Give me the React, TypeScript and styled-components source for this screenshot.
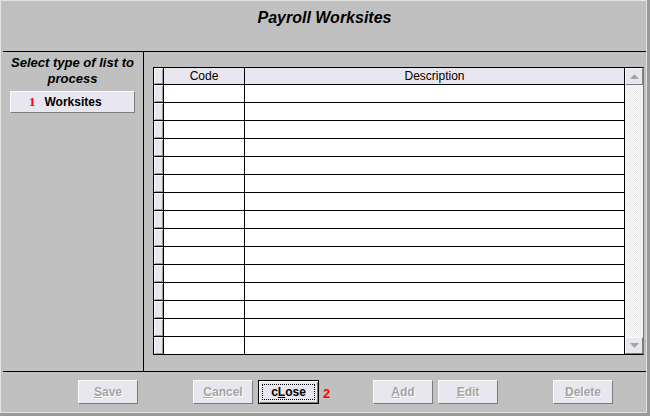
import React from "react";
import styled, { createGlobalStyle } from "styled-components";

const GlobalStyle = createGlobalStyle`
  html, body {
    margin: 0;
    padding: 0;
    background: #9a9a9a;
  }
  * {
    box-sizing: border-box;
  }
`;

const LAVENDER = "#e8e6ee";
const ROW_COUNT = 15;

const Screen = styled.div`
  width: 650px;
  height: 416px;
  background: #9a9a9a;
  font-family: "Liberation Sans", Arial, sans-serif;
`;

const Window = styled.div`
  width: 647px;
  height: 413px;
  border: 1px solid #e2e2e2;
  background: #c0c0c0;
  display: flex;
  flex-direction: column;
`;

const TitleBar = styled.div`
  height: 50px;
  padding-top: 8px;
  margin-left: 2px;
  text-align: center;
  font-size: 16px;
  font-weight: bold;
  font-style: italic;
  color: #000;
`;

const Middle = styled.div`
  height: 321px;
  margin-left: 2px;
  border-top: 1px solid #000;
  border-bottom: 1px solid #000;
  display: flex;
`;

const LeftPanel = styled.div`
  width: 141px;
  border-right: 1px solid #000;
  padding: 3px 8px 0 7px;
  display: flex;
  flex-direction: column;
  align-items: stretch;
`;

const PanelCaption = styled.div`
  font-size: 13px;
  line-height: 16px;
  font-weight: bold;
  font-style: italic;
  text-align: center;
  color: #000;
`;

const ListButton = styled.button`
  margin-top: 4px;
  height: 22px;
  background: ${LAVENDER};
  border: 1px solid;
  border-color: #fafafa #7c7c7c #7c7c7c #fafafa;
  padding: 0 0 0 18px;
  display: flex;
  align-items: center;
  gap: 9px;
  font-family: "Liberation Sans", Arial, sans-serif;
  font-size: 12px;
  font-weight: bold;
  color: #000;
`;

const RedNumber = styled.span<{ $serif?: boolean }>`
  color: #ff0000;
  font-weight: bold;
  font-size: 13px;
  font-family: ${({ $serif }) =>
    $serif ? '"Liberation Serif", "Times New Roman", serif' : '"Liberation Sans", Arial, sans-serif'};
`;

const GridArea = styled.div`
  flex: 1;
  padding: 15px 2px 16px 9px;
`;

const Grid = styled.div`
  height: 288px;
  display: flex;
  border-top: 1px solid #000;
  border-bottom: 1px solid #000;
  border-left: 1px solid #000;
  border-right: 1px solid #7c7c7c;
  background: #fff;
`;

const Table = styled.div`
  flex: 1;
  display: flex;
  flex-direction: column;
  border-right: 1px solid #000;
`;

const Row = styled.div<{ $header?: boolean; $last?: boolean }>`
  display: grid;
  grid-template-columns: 10px 81px 1fr;
  height: ${({ $header, $last }) => ($header ? "17px" : $last ? "17px" : "18px")};
  border-bottom: ${({ $last }) => ($last ? "none" : "1px solid #000")};
  background: ${({ $header }) => ($header ? LAVENDER : "#fff")};
`;

const Cell = styled.div<{ $divider?: boolean }>`
  border-right: ${({ $divider }) => ($divider ? "1px solid #000" : "none")};
  font-size: 12px;
  line-height: 16px;
  text-align: center;
  color: #000;
`;

const Indicator = styled.div`
  border-right: 1px solid #000;
  background: ${LAVENDER};
  box-shadow: inset 1px 1px 0 #fafafa, inset -1px -1px 0 #9c9c9c;
`;

const ScrollBar = styled.div`
  width: 18px;
  display: flex;
  flex-direction: column;
  background-color: #fff;
  background-image: repeating-conic-gradient(#e6e6e6 0 25%, #fff 0 50%);
  background-size: 2px 2px;
`;

const ScrollButton = styled.div`
  height: 17px;
  background: ${LAVENDER};
  border: 1px solid;
  border-color: #fafafa #7c7c7c #7c7c7c #fafafa;
  display: flex;
  align-items: center;
  justify-content: center;
`;

const Track = styled.div`
  flex: 1;
`;

const Footer = styled.div`
  flex: 1;
  display: flex;
  align-items: flex-start;
  padding: 8px 0 0 77px;
`;

const Button = styled.button<{ $gap?: number; $focused?: boolean }>`
  position: relative;
  margin-left: ${({ $gap }) => $gap ?? 0}px;
  width: ${({ $focused }) => ($focused ? 61 : 60)}px;
  height: 24px;
  padding: 0;
  background: ${LAVENDER};
  border: 1px solid;
  border-color: ${({ $focused }) =>
    $focused ? "#000" : "#fafafa #7c7c7c #7c7c7c #fafafa"};
  box-shadow: ${({ $focused }) =>
    $focused ? "inset 1px 1px 0 #fafafa, inset -1px -1px 0 #7c7c7c" : "none"};
  font-family: "Liberation Sans", Arial, sans-serif;
  font-size: 12px;
  font-weight: bold;
  color: ${({ disabled }) => (disabled ? "#a4a4a4" : "#000")};
  text-shadow: ${({ disabled }) => (disabled ? "1px 1px 0 #fff" : "none")};
  display: flex;
  align-items: center;
  justify-content: center;
`;

const FocusRing = styled.span`
  display: flex;
  align-items: center;
  justify-content: center;
  width: calc(100% - 6px);
  height: calc(100% - 6px);
  border: 1px dotted #000;
`;

const Badge = styled.span`
  position: absolute;
  left: calc(100% + 5px);
  top: 5px;
`;

function Arrow({ up }: { up?: boolean }) {
  return (
    <svg width="9" height="5" viewBox="0 0 9 5">
      <polygon points={up ? "0,5 9,5 4.5,0" : "0,0 9,0 4.5,5"} fill="#a4a4a4" />
    </svg>
  );
}

export default function App() {
  const rows = Array.from({ length: ROW_COUNT }, (_, i) => i);

  return (
    <>
      <GlobalStyle />
      <Screen>
        <Window>
          <TitleBar>Payroll Worksites</TitleBar>
          <Middle>
            <LeftPanel>
              <PanelCaption>Select type of list to process</PanelCaption>
              <ListButton>
                <RedNumber $serif>1</RedNumber>
                Worksites
              </ListButton>
            </LeftPanel>
            <GridArea>
              <Grid>
                <Table>
                  <Row $header>
                    <Indicator />
                    <Cell $divider>Code</Cell>
                    <Cell>Description</Cell>
                  </Row>
                  {rows.map((i) => (
                    <Row key={i} $last={i === ROW_COUNT - 1}>
                      <Indicator />
                      <Cell $divider />
                      <Cell />
                    </Row>
                  ))}
                </Table>
                <ScrollBar>
                  <ScrollButton>
                    <Arrow up />
                  </ScrollButton>
                  <Track />
                  <ScrollButton>
                    <Arrow />
                  </ScrollButton>
                </ScrollBar>
              </Grid>
            </GridArea>
          </Middle>
          <Footer>
            <Button disabled>
              <span><u>S</u>ave</span>
            </Button>
            <Button disabled $gap={55}>
              <span><u>C</u>ancel</span>
            </Button>
            <Button $gap={5} $focused>
              <FocusRing>
                <span>c<u>L</u>ose</span>
              </FocusRing>
              <Badge>
                <RedNumber>2</RedNumber>
              </Badge>
            </Button>
            <Button disabled $gap={54}>
              <span><u>A</u>dd</span>
            </Button>
            <Button disabled $gap={5}>
              <span><u>E</u>dit</span>
            </Button>
            <Button disabled $gap={55}>
              <span><u>D</u>elete</span>
            </Button>
          </Footer>
        </Window>
      </Screen>
    </>
  );
}
